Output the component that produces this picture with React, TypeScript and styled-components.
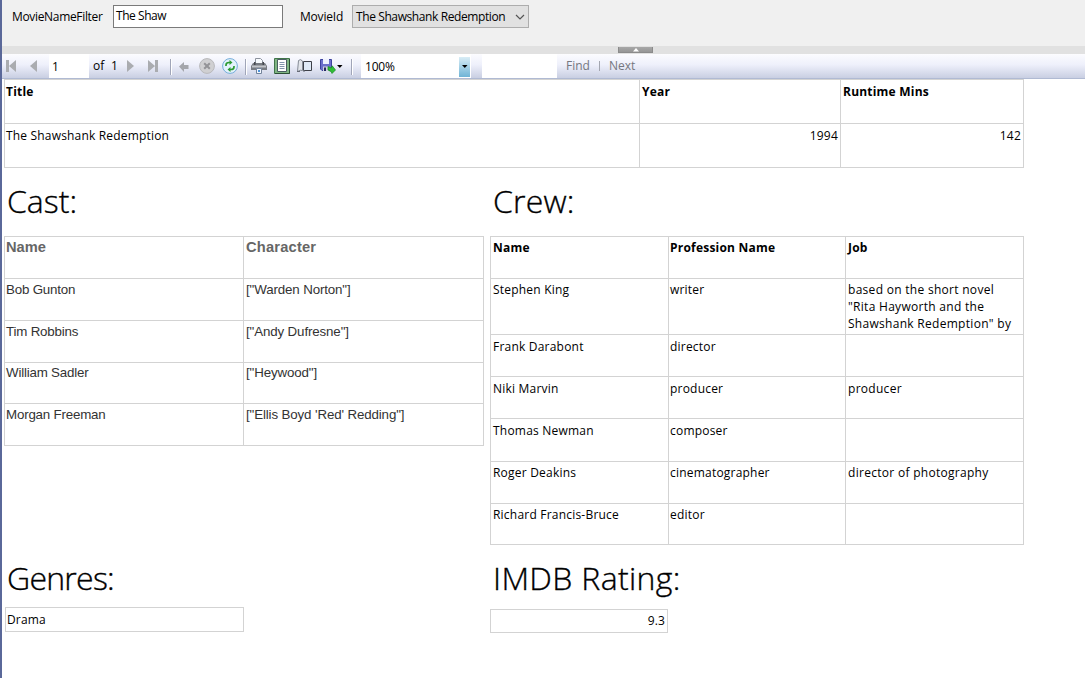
import React from "react";
import styled, { createGlobalStyle } from "styled-components";

const Global = createGlobalStyle`
  body { margin: 0; background: #fff; }
  * { box-sizing: border-box; }
  #root { height: 678px; overflow: hidden; }
`;

const ui = `"Open Sans", "Noto Sans", sans-serif`;
const line = "#d3d3d3";

const Window = styled.div`
  width: 1085px;
  height: 678px;
  border-left: 2px solid #5a6899;
  font: 12px/17px ${ui};
  color: #000;
`;

const Parameters = styled.form`
  display: flex;
  height: 46px;
  padding: 5px 0 0 10px;
  background: #f0f0f0;
`;

const Label = styled.label<{ $width: number; $ls: number }>`
  width: ${(p) => p.$width}px;
  padding-top: 3px;
  white-space: nowrap;
  letter-spacing: ${(p) => p.$ls}px;
`;

const TextBox = styled.div`
  width: 170px;
  height: 23px;
  margin-right: 17px;
  padding: 1px 2px;
  background: #fff;
  border: 1px solid #7a7a7a;
  letter-spacing: -0.45px;
`;

const Dropdown = styled.div`
  display: flex;
  justify-content: space-between;
  width: 177px;
  height: 23px;
  padding: 2px 3px 0 3px;
  background: #e1e1e1;
  border: 1px solid #adadad;
  white-space: nowrap;
  letter-spacing: -0.4px;
`;

const Splitter = styled.div`
  display: flex;
  height: 8px;
  padding: 1px 0 0 616px;
  background: #e1e1e1;
`;

const Collapse = styled.div`
  display: flex;
  justify-content: center;
  width: 35px;
  height: 6px;
  background: linear-gradient(#a8a8a8, #969696);
  border: solid #8b8b8b;
  border-width: 0 1px 1px;
`;

const Toolbar = styled.div`
  display: flex;
  align-items: flex-start;
  height: 25px;
  background: linear-gradient(#fcfcff 0%, #eef0fb 45%, #c9cfe2 100%);
  border-bottom: 1px solid #b0bad3;
`;

const Tool = styled.svg<{ $gap: number }>`
  flex: none;
  display: block;
  margin-left: ${(p) => p.$gap}px;
  margin-top: 4px;
`;

const Separator = styled.i<{ $gap: number }>`
  width: 2px;
  height: 16px;
  margin: 5px 0 0 ${(p) => p.$gap}px;
  background: #a0a5b8;
  border-right: 1px solid #fff;
`;

const ToolField = styled.div<{ $gap: number; $width: number }>`
  display: flex;
  justify-content: space-between;
  width: ${(p) => p.$width}px;
  height: 24px;
  margin-left: ${(p) => p.$gap}px;
  padding: 4px 1px 0 3px;
  background: #fff;
  letter-spacing: -0.2px;
`;

const ZoomValue = styled.span`
  padding: 0 0 0 1px;
`;

const DropButton = styled.div`
  width: 11px;
  height: 20px;
  margin-top: -1px;
  padding: 8px 0 0 3px;
  background: linear-gradient(#d9edf6, #6fb4d6);
`;

const ToolText = styled.span<{ $gap: number; $width: number; $muted?: boolean }>`
  width: ${(p) => p.$width}px;
  margin: 3px 0 0 ${(p) => p.$gap}px;
  color: ${(p) => (p.$muted ? "#75777f" : "#000")};
  white-space: nowrap;
`;

const FindDivider = styled.i`
  width: 1px;
  height: 10px;
  margin: 7px 9px 0 0;
  background: #a3a6b0;
`;

const Report = styled.main`
  width: 1020px;
  margin-left: 2px;
`;

const Table = styled.div<{ $cols: string; $rows: string; $sans?: boolean }>`
  display: grid;
  grid-template-columns: ${(p) => p.$cols};
  grid-template-rows: ${(p) => p.$rows};
  border: solid ${line};
  border-width: 1px 0 0 1px;
  ${(p) => p.$sans && `font-family: "Liberation Sans", Arial, sans-serif; font-size: 13.33px; color: #333;`}
`;

const Cell = styled.div<{
  $head?: boolean;
  $right?: boolean;
  $sans?: boolean;
  $ls?: number;
  $top?: number;
  $left?: number;
}>`
  overflow: hidden;
  padding: ${(p) => p.$top ?? 3}px 2px 0 ${(p) => p.$left ?? 1}px;
  border: solid ${line};
  border-width: 0 1px 1px 0;
  white-space: pre;
  text-align: ${(p) => (p.$right ? "right" : "left")};
  font-weight: ${(p) => (p.$head ? 700 : 400)};
  letter-spacing: ${(p) => p.$ls ?? 0.21}px;
  ${(p) => p.$head && p.$sans && "font-size: 14.67px; color: #666;"}
`;

const Columns = styled.div`
  display: flex;
  gap: 6px;
`;

const Column = styled.section<{ $width: number }>`
  width: ${(p) => p.$width}px;
`;

const Section = styled.div<{ $height: number }>`
  height: ${(p) => p.$height}px;
`;

const Heading = styled.h2<{ $height: number; $ls: number }>`
  height: ${(p) => p.$height}px;
  margin: 0;
  padding: 11px 0 0 3px;
  font-size: 32px;
  line-height: 44px;
  font-weight: 300;
  -webkit-text-stroke: 0.35px #000;
  white-space: nowrap;
  letter-spacing: ${(p) => p.$ls}px;
`;

const ValueBox = styled.div<{ $width: number; $height: number; $left?: number; $right?: boolean }>`
  width: ${(p) => p.$width}px;
  height: ${(p) => p.$height}px;
  margin-left: ${(p) => p.$left ?? 0}px;
  padding: ${(p) => (p.$right ? 2 : 3)}px 2px 0 1px;
  border: 1px solid ${line};
  text-align: ${(p) => (p.$right ? "right" : "left")};
  letter-spacing: 0.15px;
`;

const cast = [
  { name: "Bob Gunton", character: `["Warden Norton"]`, top: 2 },
  { name: "Tim Robbins", character: `["Andy Dufresne"]`, top: 2 },
  { name: "William Sadler", character: `["Heywood"]`, top: 1 },
  { name: "Morgan Freeman", character: `["Ellis Boyd 'Red' Redding"]`, top: 2 },
];

const crew = [
  {
    name: "Stephen King",
    profession: "writer",
    job: `based on the short novel\n"Rita Hayworth and the\nShawshank Redemption" by`,
    top: 2,
  },
  { name: "Frank Darabont", profession: "director", job: "", top: 3 },
  { name: "Niki Marvin", profession: "producer", job: "producer", top: 3 },
  { name: "Thomas Newman", profession: "composer", job: "", top: 3 },
  { name: "Roger Deakins", profession: "cinematographer", job: "director of photography", top: 2 },
  { name: "Richard Francis-Bruce", profession: "editor", job: "", top: 2 },
];

function ReportToolbar() {
  return (
    <Toolbar>
      <Tool $gap={4} width="10" height="16">
        <path d="M0 2h3v12H0zM10 2v12L3 8z" fill="#aaacb0" />
      </Tool>
      <Tool $gap={14} width="7" height="16"><path d="M7 2v12L0 8z" fill="#aaacb0" /></Tool>
      <ToolField $gap={12} $width={40}>1</ToolField>
      <ToolText $gap={4} $width={18}>of</ToolText>
      <ToolText $gap={0} $width={7}>1</ToolText>
      <Tool $gap={9} width="7" height="16"><path d="M0 2v12l7-6z" fill="#aaacb0" /></Tool>
      <Tool $gap={14} width="10" height="16">
        <path d="M7 2h3v12H7zM0 2v12l7-6z" fill="#aaacb0" />
      </Tool>
      <Separator $gap={12} />
      <Tool $gap={7} width="10" height="16">
        <path d="M0 8.5 5 4v3h4.500v4H5v3z" fill="#a4a6ac" />
      </Tool>
      <Tool $gap={10} width="16" height="16">
        <circle cx="8" cy="8" r="7.400" fill="#d0d0d2" stroke="#b8b8bb" />
        <path d="m5.200 5.200 5.600 5.600m0-5.600-5.600 5.600" stroke="#939397" strokeWidth="2" />
      </Tool>
      <Tool $gap={7} width="16" height="16">
        <circle cx="8" cy="8" r="7.400" fill="#e3f2fc" stroke="#74add9" />
        <path d="M4 8V7q0-2.500 3-2.500h1M12 8V9q0 2.500-3 2.500H8" fill="none" stroke="#2c9b31" strokeWidth="1.700" />
        <path d="M7.500 2 10.500 4.500 7.500 7zM8.500 9 5.500 11.500l3 2.500z" fill="#2c9b31" />
      </Tool>
      <Separator $gap={7} />
      <Tool $gap={4} width="16" height="16">
        <path d="M4.500.500h5l2 2v4h-7z" fill="#f8fbff" stroke="#8c929d" />
        <path d="M2 5h12l2 3v4H0V8z" fill="#777b82" />
        <path d="M1 7.500h14v2H1z" fill="#c2c5ca" />
        <path d="M3 4h1.500v3H3zM11.500 4H13v3h-1.500z" fill="#45484e" />
        <path d="M5.500 10.500h5v5h-5z" fill="#f4f8ff" stroke="#73839a" />
        <path d="M7 12h2v2H7z" fill="#4d93db" />
      </Tool>
      <Tool $gap={7} width="16" height="16">
        <path d="M.500.500h15v15H.500z" fill="#7fb583" stroke="#41754a" />
        <path d="M15.500 1v14.500H1" fill="none" stroke="#2c4f35" />
        <path d="M3.500 1.500h9v12h-9z" fill="#fff" stroke="#4a5e62" />
        <path d="M5.500 4.500h5m-5 2h5m-5 2h5m-5 2h5" stroke="#8295ab" />
      </Tool>
      <Tool $gap={7} width="16" height="16">
        <path d="M6.500 3.500h8v9h-8z" fill="#dfe9f6" stroke="#3d4048" />
        <path d="M1.500 2.500q2-2 4 .500v9.500q-2-1-5 1z" fill="#e2e5eb" stroke="#858b96" />
        <path d="M0 13.500h3M6 13h2" stroke="#666b76" />
      </Tool>
      <Tool $gap={7} width="16" height="16">
        <path d="M.500 1.500h11v11H2l-1.500-1.500z" fill="#6b6fcb" stroke="#3d419d" />
        <path d="M3 1h6v5H3z" fill="#eef1ff" />
        <path d="M3 8.500h6V13H3z" fill="#cfd1df" />
        <path d="M4 9.500h2V13H4z" fill="#25285f" />
        <path d="m8 8.500 3.200 1.500 1-2.200 3.300 4.200-3.500 3.500-.800-1.800L8 12z" fill="#30bd35" stroke="#168b22" strokeWidth=".7" />
      </Tool>
      <Tool $gap={1} width="6" height="16"><path d="M0 7h5.500L2.800 10z" fill="#000" /></Tool>
      <Separator $gap={8} />
      <ToolField $gap={8} $width={110}>
        <ZoomValue>100%</ZoomValue>
        <DropButton>
          <svg width="6" height="4" display="block"><path d="M0 0h5.500L2.800 3z" /></svg>
        </DropButton>
      </ToolField>
      <ToolField $gap={11} $width={75} />
      <ToolText $gap={9} $width={33} $muted>Find</ToolText>
      <FindDivider />
      <ToolText $gap={0} $width={40} $muted>Next</ToolText>
    </Toolbar>
  );
}

export default function App() {
  return (
    <>
      <Global />
      <Window>
        <Parameters>
          <Label $width={101} $ls={-0.33}>MovieNameFilter</Label>
          <TextBox>The Shaw</TextBox>
          <Label $width={52} $ls={-0.2}>MovieId</Label>
          <Dropdown>
            The Shawshank Redemption
            <svg width="10" height="16"><path d="m1 7 4 4 4-4" fill="none" stroke="#555" strokeWidth="1.200" /></svg>
          </Dropdown>
        </Parameters>
        <Splitter>
          <Collapse><svg width="8" height="5"><path d="M1 4.500 4 1l3 3.500z" fill="#fff" /></svg></Collapse>
        </Splitter>
        <ReportToolbar />
        <Report>
          <Table $cols="635px 201px 183px" $rows="44px 44px">
            <Cell $head>Title</Cell>
            <Cell $head $left={2}>Year</Cell>
            <Cell $head $left={2}>Runtime Mins</Cell>
            <Cell $ls={0.18}>The Shawshank Redemption</Cell>
            <Cell $right>1994</Cell>
            <Cell $right>142</Cell>
          </Table>
          <Columns>
            <Column $width={480}>
              <Section $height={377}>
                <Heading $height={68} $ls={0}>Cast:</Heading>
                <Table $sans $cols="239px 240px" $rows="42px 42px 42px 41px 42px">
                  <Cell $head $sans $top={2} $ls={0}>Name</Cell>
                  <Cell $head $sans $top={2} $left={2} $ls={0.2}>Character</Cell>
                  {cast.map((c) => (
                    <React.Fragment key={c.name}>
                      <Cell $top={c.top} $ls={-0.19}>{c.name}</Cell>
                      <Cell $top={c.top} $ls={-0.13} $left={2}>{c.character}</Cell>
                    </React.Fragment>
                  ))}
                </Table>
              </Section>
              <Heading $height={62} $ls={-0.75}>Genres:</Heading>
              <ValueBox $width={239} $height={25} $left={1}>Drama</ValueBox>
            </Column>
            <Column $width={534}>
              <Section $height={377}>
                <Heading $height={68} $ls={0.2}>Crew:</Heading>
                <Table $cols="178px 177px 178px" $rows="42px 56px 42px 42px 43px 42px 41px">
                  <Cell $head $top={2} $left={2}>Name</Cell>
                  <Cell $head $top={2}>Profession Name</Cell>
                  <Cell $head $top={2} $left={2}>Job</Cell>
                  {crew.map((c) => (
                    <React.Fragment key={c.name}>
                      <Cell $top={c.top} $left={2}>{c.name}</Cell>
                      <Cell $top={c.top}>{c.profession}</Cell>
                      <Cell $top={c.top} $left={2} $ls={0.29}>{c.job}</Cell>
                    </React.Fragment>
                  ))}
                </Table>
              </Section>
              <Heading $height={64} $ls={0.33}>IMDB Rating:</Heading>
              <ValueBox $width={178} $height={24} $right>9.3</ValueBox>
            </Column>
          </Columns>
        </Report>
      </Window>
    </>
  );
}
